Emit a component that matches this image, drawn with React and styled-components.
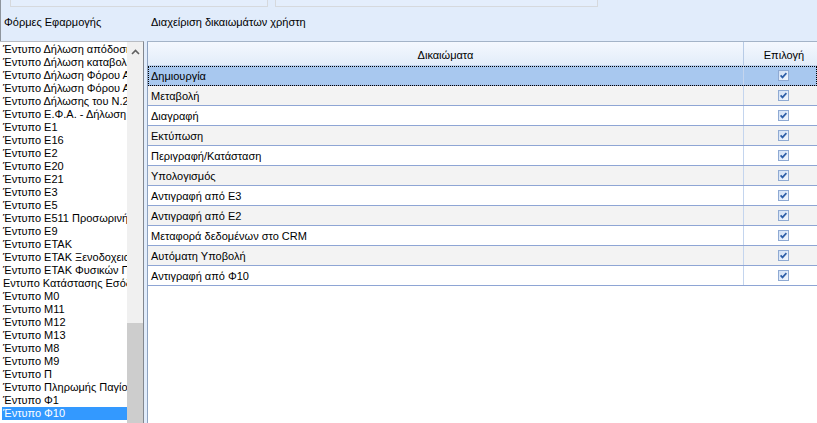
import React from "react";
import styled, { createGlobalStyle } from "styled-components";

const forms = [
  "Έντυπο Δήλωση απόδοσης παρακρατούμενων",
  "Έντυπο Δήλωση καταβολής",
  "Έντυπο Δήλωση Φόρου Αμοιβών",
  "Έντυπο Δήλωση Φόρου Ακινήτων",
  "Έντυπο Δήλωσης του Ν.2238",
  "Έντυπο Ε.Φ.Α. - Δήλωση",
  "Έντυπο Ε1",
  "Έντυπο Ε16",
  "Έντυπο Ε2",
  "Έντυπο Ε20",
  "Έντυπο Ε21",
  "Έντυπο Ε3",
  "Έντυπο Ε5",
  "Έντυπο Ε511 Προσωρινή",
  "Έντυπο Ε9",
  "Έντυπο ΕΤΑΚ",
  "Έντυπο ΕΤΑΚ Ξενοδοχειακών",
  "Έντυπο ΕΤΑΚ Φυσικών Προσώπων",
  "Εντυπο Κατάστασης Εσόδων",
  "Έντυπο Μ0",
  "Έντυπο Μ11",
  "Έντυπο Μ12",
  "Έντυπο Μ13",
  "Έντυπο Μ8",
  "Έντυπο Μ9",
  "Έντυπο Π",
  "Έντυπο Πληρωμής Παγίου",
  "Έντυπο Φ1",
  "Έντυπο Φ10",
];

const rights = [
  "Δημιουργία",
  "Μεταβολή",
  "Διαγραφή",
  "Εκτύπωση",
  "Περιγραφή/Κατάσταση",
  "Υπολογισμός",
  "Αντιγραφή από Ε3",
  "Αντιγραφή από Ε2",
  "Μεταφορά δεδομένων στο CRM",
  "Αυτόματη Υποβολή",
  "Αντιγραφή από Φ10",
];

const Check = () => (
  <svg width="11" height="11" viewBox="0 0 11 11">
    <defs>
      <linearGradient id="cb" x1="0" y1="0" x2="1" y2="1">
        <stop offset="0" stopColor="#cfdff5" />
        <stop offset="1" stopColor="#f4f8fe" />
      </linearGradient>
    </defs>
    <rect x="0.5" y="0.5" width="10" height="10" fill="url(#cb)" stroke="#8faad3" />
    <path d="M2.6 5.4 L4.5 7.4 L8.4 3.2" fill="none" stroke="#2f5fa8" strokeWidth="1.7" />
  </svg>
);

const App = () => {
  return (
    <>
      <GlobalStyle />
      <Page>
        <TopArea>
          <TopBox width={256} />
          <TopBox width={321} />
        </TopArea>
        <Labels>
          <Label>Φόρμες Εφαρμογής</Label>
          <Label>Διαχείριση δικαιωμάτων χρήστη</Label>
        </Labels>
        <Content>
          <ListBox>
            <Items>
              {forms.map((f, i) => (
                <Item key={i} selected={i === forms.length - 1}>
                  {f}
                </Item>
              ))}
            </Items>
            <ScrollBar>
              <UpArrow>
                <svg width="9" height="6" viewBox="0 0 9 6">
                  <path d="M1 5 L4.5 1.5 L8 5" fill="none" stroke="#606060" strokeWidth="1.6" />
                </svg>
              </UpArrow>
              <Track />
              <Thumb />
            </ScrollBar>
          </ListBox>
          <Grid>
            <HeaderRow>
              <HeadCell>Δικαιώματα</HeadCell>
              <HeadCell last>Επιλογή</HeadCell>
            </HeaderRow>
            {rights.map((r, i) => (
              <Row key={i} even={i % 2 === 1} selected={i === 0}>
                <Cell>{r}</Cell>
                <CheckCell>
                  <Check />
                </CheckCell>
              </Row>
            ))}
          </Grid>
        </Content>
      </Page>
    </>
  );
};

export default App;

const GlobalStyle = createGlobalStyle`
  body {
    margin: 0;
    background: #e1ecfb;
    font-family: "Liberation Sans", Arial, sans-serif;
    font-size: 11px;
    color: #000;
  }
`;

const Page = styled.div`
  width: 817px;
  height: 423px;
  overflow: hidden;
  display: flex;
  flex-direction: column;
`;

const TopArea = styled.div`
  height: 7px;
  display: flex;
  gap: 7px;
  padding-left: 9px;
  border-left: 1px solid #8e959d;
`;

const TopBox = styled.div`
  width: ${(p) => p.width}px;
  height: 6px;
  border: 1px solid #d6d9dd;
  border-top: none;
  background: #e4eefc;
`;

const Labels = styled.div`
  height: 34px;
  display: grid;
  grid-template-columns: 147px 1fr;
  border-left: 1px solid #8e959d;
  box-sizing: border-box;
`;

const Label = styled.div`
  padding: 9px 0 0 4px;
  line-height: 13px;
  margin-left: -1px;
`;

const Content = styled.div`
  flex: 1;
  display: flex;
  gap: 3px;
  min-height: 0;
`;

const ListBox = styled.div`
  width: 143px;
  flex-shrink: 0;
  display: flex;
  background: #fff;
  border-top: 1px solid #b8bcc2;
  border-right: 1px solid #82878f;
`;

const Items = styled.div`
  width: 125px;
  padding: 1px 0 0 2px;
  overflow: hidden;
`;

const Item = styled.div`
  height: 13px;
  line-height: 13px;
  padding-left: 1px;
  white-space: nowrap;
  overflow: hidden;
  background: ${(p) => (p.selected ? "#3399ff" : "transparent")};
  color: ${(p) => (p.selected ? "#fff" : "#000")};
`;

const ScrollBar = styled.div`
  width: 16px;
  display: flex;
  flex-direction: column;
  background: #f0f0f0;
`;

const UpArrow = styled.div`
  height: 17px;
  display: flex;
  align-items: center;
  justify-content: center;
  padding-top: 1px;
`;

const Track = styled.div`
  height: 263px;
`;

const Thumb = styled.div`
  flex: 1;
  background: #cdcdcd;
`;

const Grid = styled.div`
  flex: 1;
  background: #fff;
  border-top: 1px solid #a3b3c7;
  border-left: 1px solid #8da2c0;
  overflow: hidden;
`;

const HeaderRow = styled.div`
  display: grid;
  grid-template-columns: 596px 80px;
  height: 23px;
  background: linear-gradient(#f4f8fe, #e2ecf9);
  border-bottom: 1px solid #bfd2ec;
`;

const HeadCell = styled.div`
  display: flex;
  align-items: center;
  justify-content: center;
  border-right: ${(p) => (p.last ? "none" : "1px solid #b7cbe6")};
  padding-top: 2px;
`;

const Row = styled.div`
  display: grid;
  grid-template-columns: 596px 80px;
  height: 19px;
  border-bottom: 1px solid #8ea5d4;
  background: ${(p) => (p.selected ? "#a8c8ef" : p.even ? "#f3f3f3" : "#fff")};
  outline: ${(p) => (p.selected ? "1px dotted #000" : "none")};
  outline-offset: -1px;
`;

const Cell = styled.div`
  display: flex;
  align-items: center;
  padding-left: 3px;
  border-right: 1px solid #c4d5ee;
  white-space: nowrap;
`;

const CheckCell = styled.div`
  display: flex;
  align-items: center;
  justify-content: center;
  padding-right: 1px;
`;
